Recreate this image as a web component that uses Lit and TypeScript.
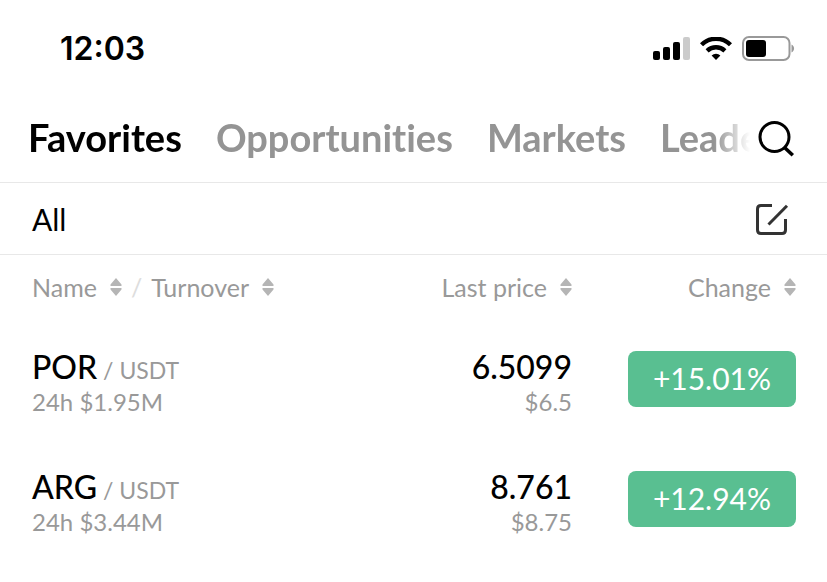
import { LitElement, html, css } from "lit";
import { customElement, property } from "lit/decorators.js";

interface Pair {
  base: string;
  quote: string;
  turnover: string;
  price: string;
  fiat: string;
  change: string;
}

const TABS = ["Favorites", "Opportunities", "Markets", "Leaders"];

const PAIRS: Pair[] = [
  { base: "POR", quote: "USDT", turnover: "24h $1.95M", price: "6.5099", fiat: "$6.5", change: "+15.01%" },
  { base: "ARG", quote: "USDT", turnover: "24h $3.44M", price: "8.761", fiat: "$8.75", change: "+12.94%" },
];

@customElement("status-bar")
export class StatusBar extends LitElement {
  static styles = css`
    :host {
      display: flex;
      align-items: center;
      justify-content: space-between;
      height: 96px;
      padding: 2px 32px 0 60px;
      box-sizing: border-box;
    }
    .time {
      font: 600 32px/40px Inter, sans-serif;
    }
    .icons {
      display: flex;
      align-items: center;
      gap: 10px;
    }
    svg {
      display: block;
    }
  `;

  render() {
    return html`
      <span class="time">12:03</span>
      <div class="icons">
        <svg width="37" height="24" viewBox="0 0 37 24" aria-hidden="true">
          <rect x="0" y="14" width="7" height="9" rx="2" />
          <rect x="10" y="10" width="7" height="13" rx="2" />
          <rect x="20" y="5" width="7" height="18" rx="2" />
          <rect x="30" y="0" width="7" height="23" rx="2" fill="#cbcbcb" />
        </svg>
        <svg width="32" height="24" viewBox="0 0 32 24" aria-hidden="true">
          <g fill="none" stroke="#000" stroke-width="4.4">
            <path d="M1.500 7.800a20.500 20.500 0 0 1 29 0" />
            <path d="M7.100 13.800a13 13 0 0 1 17.800 0" />
          </g>
          <path d="M11.600 18.500a6.600 6.600 0 0 1 8.800 0L16 23z" />
        </svg>
        <svg width="53" height="26" viewBox="0 0 53 26" aria-hidden="true">
          <rect x="1" y="1" width="46.500" height="23" rx="6" fill="none" stroke="#999" stroke-width="2" />
          <rect x="4" y="4" width="20" height="17" rx="3" />
          <path d="M49.500 8.500v8c3.400-1.600 3.400-6.400 0-8z" fill="#999" />
        </svg>
      </div>
    `;
  }
}

@customElement("sort-button")
export class SortButton extends LitElement {
  @property() label = "";

  static styles = css`
    :host {
      display: inline-block;
    }
    button {
      display: flex;
      align-items: center;
      gap: 13px;
      padding: 0;
      border: 0;
      background: none;
      color: #999;
      font: inherit;
      line-height: 32px;
    }
  `;

  render() {
    return html`
      <button type="button">
        ${this.label}
        <svg width="12" height="18" viewBox="0 0 12 18" fill="#b5b5b5" aria-hidden="true">
          <path d="M6 0L11.500 6.500V8H.5V6.500zM6 18L.5 11.500V10H11.500V11.500z" />
        </svg>
      </button>
    `;
  }
}

@customElement("app-root")
export class AppRoot extends LitElement {
  static styles = css`
    :host {
      display: block;
      min-height: 100vh;
      overflow: hidden;
      background: #fff;
      color: #000;
      font: 400 24px/32px Lato, "Noto Sans", sans-serif;
      font-variant-ligatures: none;
    }
    button {
      padding: 0;
      border: 0;
      background: none;
      color: inherit;
      font: inherit;
      font-variant-ligatures: none;
    }
    svg {
      display: block;
    }
    .top {
      display: flex;
      align-items: center;
      height: 87px;
      padding: 0 32px 0 28px;
      box-sizing: border-box;
      border-bottom: 1px solid #e8e8e8;
    }
    .tabs {
      display: flex;
      flex: 1;
      min-width: 0;
      gap: 34px;
      overflow: hidden;
      padding-bottom: 4px;
      -webkit-mask-image: linear-gradient(to left, transparent 8px, #000 44px);
      mask-image: linear-gradient(to left, transparent 8px, #000 44px);
    }
    .tab {
      flex: none;
      color: #949494;
      font-size: 38px;
      font-weight: 700;
      line-height: 48px;
    }
    .tab.active {
      color: #000;
    }
    .filter {
      display: flex;
      align-items: center;
      justify-content: space-between;
      height: 72px;
      padding: 0 38px 0 32px;
      box-sizing: border-box;
      border-bottom: 1px solid #e8e8e8;
    }
    .group {
      font-size: 30px;
      line-height: 40px;
    }
    table {
      width: 100%;
      table-layout: fixed;
      border-collapse: collapse;
    }
    th {
      height: 64px;
      padding: 0;
      font-size: 25px;
      font-weight: 400;
      text-align: right;
      color: #999;
    }
    td {
      height: 120px;
      padding: 32px 0 0;
      box-sizing: border-box;
      vertical-align: top;
      text-align: right;
    }
    .name {
      padding-left: 32px;
      text-align: left;
    }
    .price {
      width: 200px;
    }
    .change {
      width: 224px;
      padding-right: 31px;
    }
    .sorts {
      display: flex;
      align-items: center;
      gap: 9px;
    }
    .slash {
      color: #ddd;
    }
    .main {
      font-size: 32px;
      font-weight: 500;
    }
    .sub {
      margin-top: 3px;
      color: #999;
    }
    .quote {
      color: #999;
      font-size: 23px;
      font-weight: 400;
      line-height: 24px;
    }
    .pill {
      width: 168px;
      height: 56px;
      padding-bottom: 3px;
      border-radius: 8px;
      background: #59bf91;
      color: #fff;
      font-size: 30px;
      text-align: center;
    }
  `;

  render() {
    return html`
      <status-bar></status-bar>
      <header class="top">
        <nav class="tabs">
          ${TABS.map((t, i) => html`<button type="button" class="tab ${i === 0 ? "active" : ""}">${t}</button>`)}
        </nav>
        <button type="button" aria-label="Search">
          <svg width="37" height="37" viewBox="0 0 37 37" fill="none" stroke="#000" stroke-width="3">
            <circle cx="16.500" cy="16" r="14.500" />
            <path d="M26 26L34.800 34.200" stroke-width="3.600" />
          </svg>
        </button>
      </header>
      <section class="filter">
        <button type="button" class="group">All</button>
        <button type="button" aria-label="Edit favorites">
          <svg width="33" height="32" viewBox="0 0 33 32" fill="none" stroke="#333" stroke-width="3">
            <path d="M16 2.500H5Q1.500 2.500 1.500 6V27Q1.500 30.500 5 30.500H26Q29.500 30.500 29.500 27V16" />
            <path d="M12.500 21.500L31 2.800" />
          </svg>
        </button>
      </section>
      <table>
        <thead>
          <tr>
            <th class="name" scope="col">
              <div class="sorts">
                <sort-button label="Name"></sort-button>
                <span class="slash">/</span>
                <sort-button label="Turnover"></sort-button>
              </div>
            </th>
            <th class="price" scope="col"><sort-button label="Last price"></sort-button></th>
            <th class="change" scope="col"><sort-button label="Change"></sort-button></th>
          </tr>
        </thead>
        <tbody>
          ${PAIRS.map(
            (p) => html`
              <tr>
                <td class="name">
                  <div class="main">${p.base}<span class="quote"> / ${p.quote}</span></div>
                  <div class="sub">${p.turnover}</div>
                </td>
                <td class="price">
                  <div class="main">${p.price}</div>
                  <div class="sub">${p.fiat}</div>
                </td>
                <td class="change"><button type="button" class="pill">${p.change}</button></td>
              </tr>
            `
          )}
        </tbody>
      </table>
    `;
  }
}
